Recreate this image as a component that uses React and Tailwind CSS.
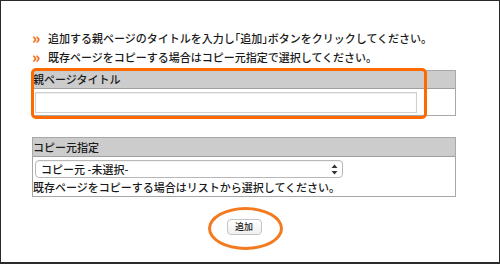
import React from "react";

const font = { fontFamily: '"Noto Sans CJK JP", "Noto Sans", sans-serif' };

const Guide = ({ children }) => (
  <p className="h-[19px] flex items-center text-[11px] text-[#1a1a1a] font-medium">
    <span className="w-[16px] -mt-[2px] text-[#f26a10] font-black text-[15px] leading-none">
      »
    </span>
    <span>{children}</span>
  </p>
);

const SelectBox = () => (
  <div className="mt-[3px] ml-[2px] h-[18px] w-[308px] flex items-center justify-between rounded-[4px] border border-[#b8b8b8] bg-white pl-[5px] pr-[4px] text-[11px] text-[#1a1a1a] shadow-[inset_0_1px_1px_rgba(0,0,0,0.05)]">
    <span>コピー元 -未選択-</span>
    <svg width="7" height="11" viewBox="0 0 7 11">
      <path d="M3.5 0.5 L6.5 4 L0.5 4 Z" fill="#333" />
      <path d="M3.5 10.5 L6.5 7 L0.5 7 Z" fill="#333" />
    </svg>
  </div>
);

export default function App() {
  return (
    <div
      className="relative w-[500px] h-[264px] overflow-hidden bg-white border border-b-2 border-[#2a2a2a] pt-[28px] pl-[31px]"
      style={font}
    >
      <Guide>
        追加する親ページのタイトルを入力し
        <span className="[font-feature-settings:'halt']">「</span>追加
        <span className="[font-feature-settings:'halt']">」</span>
        ボタンをクリックしてください。
      </Guide>
      <Guide>既存ページをコピーする場合はコピー元指定で選択してください。</Guide>

      <div className="mt-[3px] w-[424px] border border-[#a8a8a8] font-medium">
        <div className="h-[18px] bg-[#cccccc] border-b border-[#a0a0a0] flex items-center text-[11px] text-[#1a1a1a]">
          親ページタイトル
        </div>
        <div className="h-[26px] flex items-center pl-[2px]">
          <div className="h-[21px] w-[382px] border border-[#cfcfcf] bg-white shadow-[inset_0_1px_1px_rgba(0,0,0,0.08)]" />
        </div>
      </div>

      <div className="mt-[21px] w-[424px] border border-[#a8a8a8] font-medium">
        <div className="h-[19px] bg-[#cccccc] border-b border-[#a0a0a0] flex items-center text-[11px] text-[#1a1a1a]">
          コピー元指定
        </div>
        <SelectBox />
        <div className="h-[18px] flex items-center text-[11px] text-[#1a1a1a]">
          既存ページをコピーする場合はリストから選択してください。
        </div>
      </div>

      <div className="w-[424px] flex justify-center mt-[22px]">
        <button className="h-[16px] w-[35px] flex items-center justify-center rounded-[4px] border border-[#c4c4c4] bg-gradient-to-b from-white to-[#f0f0f0] text-[9px] font-medium text-[#1a1a1a]">
          追加
        </button>
      </div>

      <div className="absolute left-[30px] top-[67px] w-[396px] h-[51px] rounded-[5px] border-[3px] border-[#ff6a00]" />
      <div className="absolute left-[207px] top-[206px] w-[75px] h-[43px] rounded-[50%] border-[3px] border-[#f47a1f]" />
    </div>
  );
}
